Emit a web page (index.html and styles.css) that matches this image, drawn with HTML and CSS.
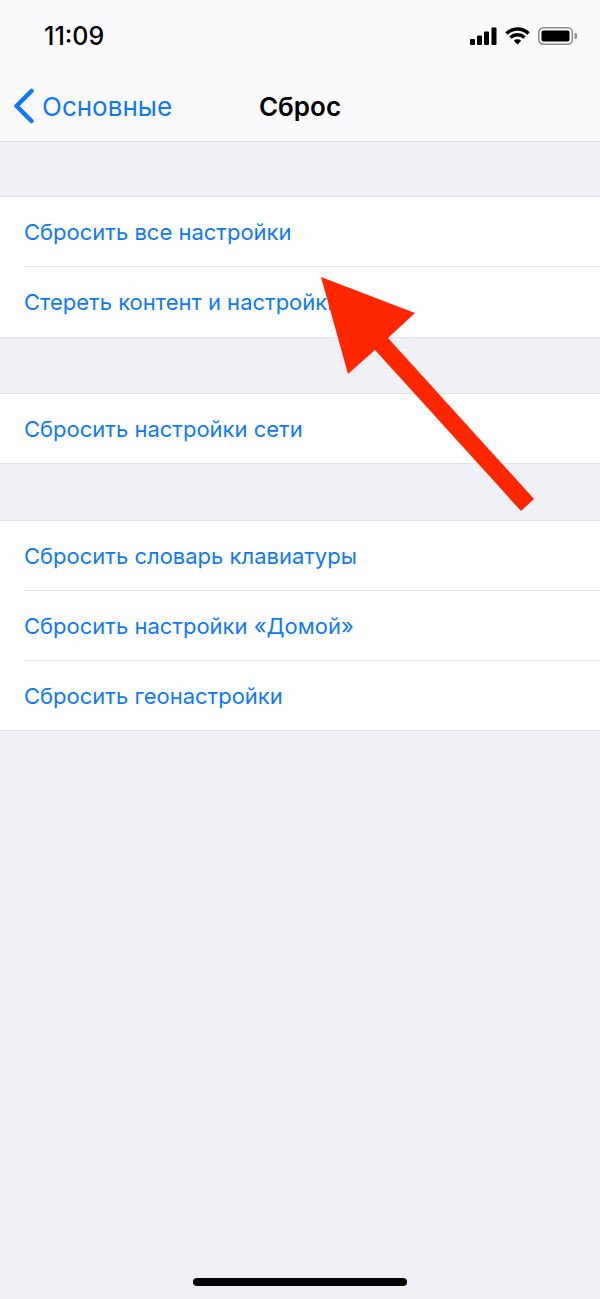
FILE: index.html
```html
<!DOCTYPE html>
<html lang="ru">

<head>
    <meta charset="UTF-8">
    <meta name="viewport" content="width=device-width, initial-scale=1.0">
    <title>Сброс</title>
    <link rel="stylesheet" href="styles.css">
</head>

<body>
    <div class="phone">
        <div class="top">
            <div class="status">
                <span class="time">11:09</span>
                <div class="status-icons">
                    <svg class="signal" width="27" height="18" viewBox="0 0 27 18">
                        <rect x="0" y="12" width="5" height="6" rx="1" />
                        <rect x="7" y="8.5" width="5" height="9.5" rx="1" />
                        <rect x="14" y="4.5" width="5" height="13.5" rx="1" />
                        <rect x="21.500" y="0.500" width="5" height="17.500" rx="1" />
                    </svg>
                    <svg class="wifi" width="25" height="18" viewBox="0 0 25 18">
                        <path d="M1.500 6.500 A16 16 0 0 1 23.500 6.500" />
                        <path d="M5.500 10.500 A10.500 10.500 0 0 1 19.500 10.500" />
                        <path class="wifi-dot" d="M12.500 17.500 L8.800 13.700 A5.500 5.500 0 0 1 16.200 13.700 Z" />
                    </svg>
                    <svg class="battery" width="39" height="18" viewBox="0 0 39 18">
                        <rect class="battery-shell" x="0.800" y="0.800" width="33.500" height="16.400" rx="4.500" />
                        <rect x="3.500" y="3.500" width="28" height="11" rx="2" />
                        <path class="battery-cap" d="M36.500 6 A3 3 0 0 1 36.500 12 Z" />
                    </svg>
                </div>
            </div>
            <div class="nav">
                <a class="back">
                    <svg width="22" height="36" viewBox="0 0 22 36">
                        <path d="M18.500 3 L3.500 18 L18.500 33" />
                    </svg>
                    <span>Основные</span>
                </a>
                <h1>Сброс</h1>
            </div>
        </div>

        <div class="group group-first">
            <div class="row">Сбросить все настройки</div>
            <div class="row">Стереть контент и настройки</div>
        </div>
        <div class="group">
            <div class="row">Сбросить настройки сети</div>
        </div>
        <div class="group group-last">
            <div class="row">Сбросить словарь клавиатуры</div>
            <div class="row">Сбросить настройки «Домой»</div>
            <div class="row">Сбросить геонастройки</div>
        </div>

        <div class="home-bar"></div>

        <svg class="arrow" width="600" height="1299" viewBox="0 0 600 1299">
            <polygon points="321,277 415,313 388,338 534,499 521,511 375,350 348,374" />
        </svg>
    </div>
</body>

</html>
```

FILE: styles.css
```css
* {
    margin: 0;
    padding: 0;
    box-sizing: border-box;
    font-family: Inter, "Liberation Sans", sans-serif;
}

html,
body {
    height: 100%;
    background-color: #f0f1f6;
}

.phone {
    position: relative;
    display: flex;
    flex-direction: column;
    width: 600px;
    height: 1299px;
    overflow: hidden;
}

.top {
    height: 142px;
    background-color: #fafafc;
    border-bottom: 1px solid #dcdcde;
}

.status {
    display: flex;
    justify-content: space-between;
    align-items: center;
    height: 72px;
    padding: 0 23px 0 44px;
}

.time {
    font-size: 25px;
    font-weight: 500;
    color: #000;
}

.status-icons {
    display: flex;
    align-items: center;
    gap: 8px;
}

.signal rect,
.battery rect {
    fill: #000;
}

.wifi path {
    fill: none;
    stroke: #000;
    stroke-width: 3.500;
}

.wifi .wifi-dot {
    fill: #000;
    stroke: none;
}

.battery .battery-shell {
    fill: none;
    stroke: #8e8e8e;
    stroke-width: 1.500;
}

.battery-cap {
    fill: #8e8e8e;
}

.nav {
    position: relative;
    display: flex;
    align-items: center;
    justify-content: center;
    height: 69px;
}

.nav h1 {
    font-size: 26px;
    font-weight: 600;
    color: #000;
}

.back {
    position: absolute;
    left: 13px;
    top: 16px;
    display: flex;
    align-items: center;
    gap: 7px;
    font-size: 26px;
    color: #0f78fa;
}

.back svg path {
    fill: none;
    stroke: #0f78fa;
    stroke-width: 4.500;
    stroke-linecap: round;
    stroke-linejoin: round;
}

.group {
    margin-top: 55px;
    background-color: #fff;
    border-top: 1px solid #e0e0e2;
    border-bottom: 1px solid #e0e0e2;
}

.group-first {
    margin-top: 54px;
}

.group-last {
    margin-top: 56px;
}

.row {
    display: flex;
    align-items: center;
    height: 70px;
    margin-left: 24px;
    font-size: 22px;
    color: #0f78fa;
    border-bottom: 1px solid #e4e4e6;
}

.row:last-child {
    height: 69px;
    border-bottom: none;
}

.group-first .row:last-child {
    height: 70px;
}

.home-bar {
    width: 214px;
    height: 8px;
    margin: auto auto 13px;
    background-color: #000;
    border-radius: 4px;
}

.arrow {
    position: absolute;
    left: 0;
    top: 0;
}

.arrow polygon {
    fill: #ff2600;
}
```
